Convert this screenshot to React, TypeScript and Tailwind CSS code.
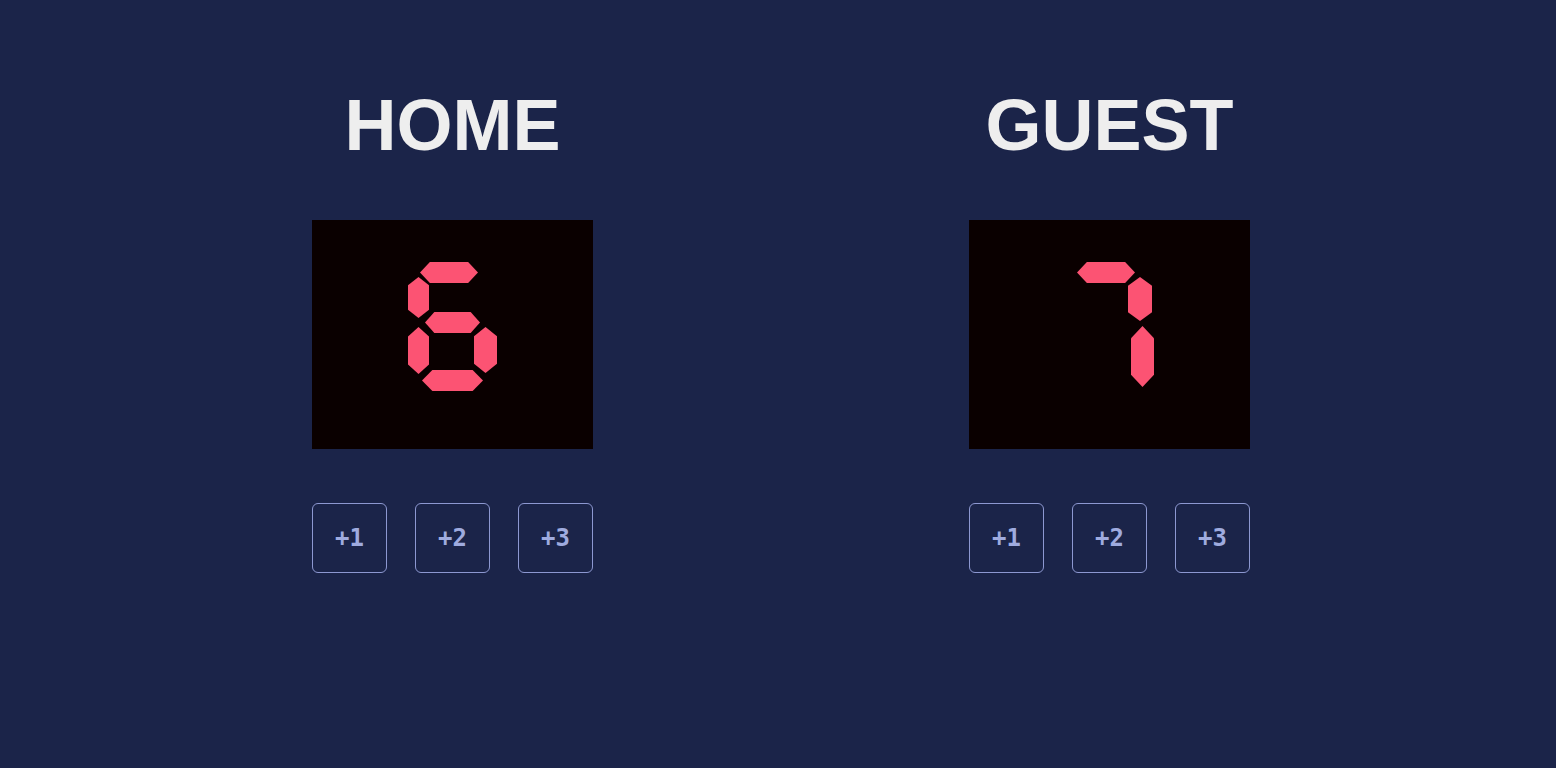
import { useState } from 'react';

type Seg = 'a' | 'b' | 'c' | 'd' | 'e' | 'f' | 'g';

// segment boxes inside an 89x129 digit cell
const segBoxes: Record<Seg, { l: number; t: number; w: number; h: number; vertical: boolean }> = {
  a: { l: 12, t: 0, w: 58, h: 21, vertical: false },
  b: { l: 63, t: 15, w: 24, h: 44, vertical: true },
  c: { l: 66, t: 65, w: 23, h: 46, vertical: true },
  d: { l: 14, t: 108, w: 61, h: 21, vertical: false },
  e: { l: 0, t: 65, w: 21, h: 47, vertical: true },
  f: { l: 0, t: 15, w: 21, h: 41, vertical: true },
  g: { l: 17, t: 50, w: 55, h: 21, vertical: false },
};

const digitSegs: Record<string, Seg[]> = {
  '0': ['a', 'b', 'c', 'd', 'e', 'f'],
  '1': ['b', 'c'],
  '2': ['a', 'b', 'g', 'e', 'd'],
  '3': ['a', 'b', 'g', 'c', 'd'],
  '4': ['f', 'g', 'b', 'c'],
  '5': ['a', 'f', 'g', 'c', 'd'],
  '6': ['a', 'f', 'g', 'e', 'd', 'c'],
  '7': ['a', 'b', 'c'],
  '8': ['a', 'b', 'c', 'd', 'e', 'f', 'g'],
  '9': ['a', 'b', 'c', 'd', 'f', 'g'],
};

const hClip = '[clip-path:polygon(0_50%,17%_0,83%_0,100%_50%,83%_100%,17%_100%)]';
const vClip = '[clip-path:polygon(50%_0,100%_20%,100%_80%,50%_100%,0_80%,0_20%)]';

function Digit({ d }: { d: string }) {
  const on = digitSegs[d] || [];
  return (
    <div className="relative w-[89px] h-[129px]">
      {on.map((s) => {
        const box = { ...segBoxes[s] };
        // lower right stretches down when the bottom bar is off
        if (s === 'c' && !on.includes('d')) {
          box.t = 64;
          box.h = 61;
        }
        return (
          <div
            key={s}
            className={`absolute bg-[#fc5373] ${box.vertical ? vClip : hClip}`}
            style={{ left: box.l, top: box.t, width: box.w, height: box.h }}
          />
        );
      })}
    </div>
  );
}

function TeamPanel({ name, initial }: { name: string; initial: number }) {
  const [score, setScore] = useState(initial);
  return (
    <div className="flex flex-col items-center w-[281px]">
      <h2 className="text-[72px] leading-none font-bold text-[#eeeeee]">{name}</h2>

      {/* Score display */}
      <div
        role="img"
        aria-label={`${name} score ${score}`}
        className="mt-[59px] w-[281px] h-[229px] bg-[#0a0000] flex justify-center gap-[14px] pt-[42px]"
      >
        {String(score).split('').map((c, i) => (
          <Digit key={i} d={c} />
        ))}
      </div>

      <div className="mt-[54px] flex gap-[28px]">
        {[1, 2, 3].map((n) => (
          <button
            key={n}
            onClick={() => setScore(score + n)}
            className="w-[75px] h-[70px] rounded-[6px] border border-[#8d98d1] flex items-center justify-center text-[24px] leading-none font-semibold text-[#9fabdf] font-['DejaVu_Sans_Mono',monospace]"
          >
            +{n}
          </button>
        ))}
      </div>
    </div>
  );
}

export default function App() {
  return (
    <div className="min-h-screen bg-[#1b2449] font-['Liberation_Sans',Arial,sans-serif]">
      <div className="flex justify-center gap-[376px] pt-[89px] pl-[6px]">
        <TeamPanel name="HOME" initial={6} />
        <TeamPanel name="GUEST" initial={7} />
      </div>
    </div>
  );
}
